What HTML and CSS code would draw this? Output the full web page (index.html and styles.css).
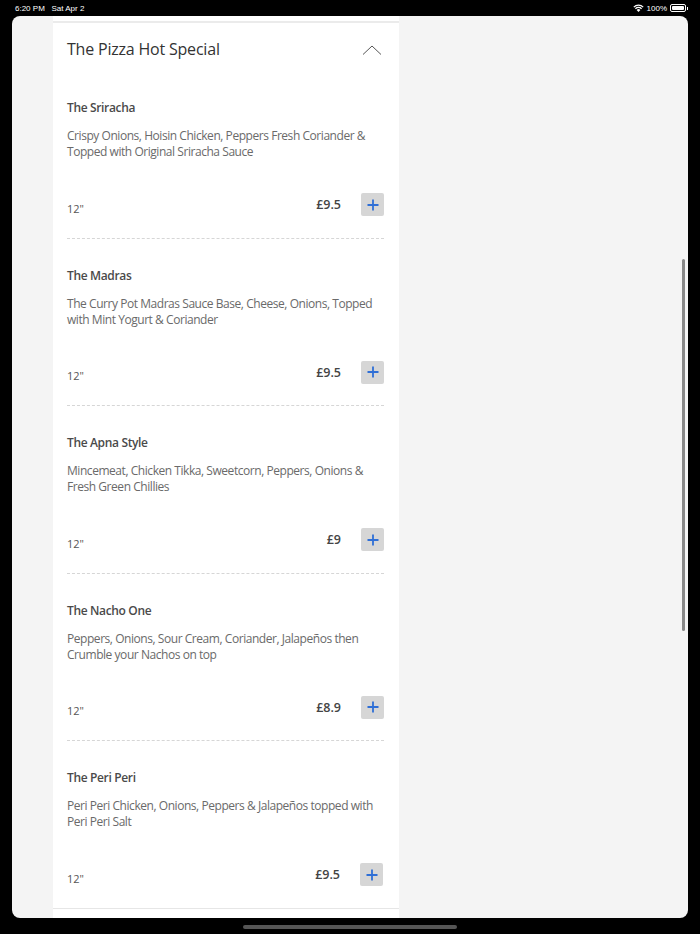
FILE: index.html
```html
<!DOCTYPE html>
<html>
<head>
<meta charset="utf-8">
<link rel="stylesheet" href="styles.css">
<title>The Pizza Hot Special</title>
</head>
<body>
  <div class="statusbar">
    <span class="time">6:20 PM&nbsp;&nbsp;&nbsp;Sat Apr 2</span>
    <span class="status-right">
      <svg class="wifi" width="11" height="8" viewBox="0 0 11 8"><path d="M5.5 8 L3.6 6 A2.7 2.7 0 0 1 7.4 6 Z" fill="#fff"/><path d="M2.4 4.8 A4.4 4.4 0 0 1 8.6 4.8" stroke="#fff" stroke-width="1.3" fill="none"/><path d="M0.8 3.1 A6.7 6.7 0 0 1 10.2 3.1" stroke="#fff" stroke-width="1.3" fill="none"/></svg>
      <span>100%</span>
      <span class="battery"><span class="battery-fill"></span></span>
    </span>
  </div>

  <div class="screen">
    <div class="column">
      <div class="topstrip"></div>
      <div class="card">
        <div class="card-head">
          <h2>The Pizza Hot Special</h2>
          <svg class="chevron" width="20" height="10" viewBox="0 0 20 10"><path d="M1 9.5 L10 1 L19 9.5" stroke="#555" stroke-width="1" fill="none"/></svg>
        </div>

        <div class="item">
          <div class="item-name">The Sriracha</div>
          <div class="item-desc">Crispy Onions, Hoisin Chicken, Peppers Fresh Coriander &amp; Topped with Original Sriracha Sauce</div>
          <div class="item-row">
            <span class="size">12"</span>
            <span class="price">£9.5</span>
            <span class="add"><svg width="12" height="12" viewBox="0 0 12 12"><path d="M6 0.5 V11.5 M0.5 6 H11.5" stroke="#2f6fd6" stroke-width="1.8"/></svg></span>
          </div>
        </div>

        <div class="item">
          <div class="item-name">The Madras</div>
          <div class="item-desc">The Curry Pot Madras Sauce Base, Cheese, Onions, Topped with Mint Yogurt &amp; Coriander</div>
          <div class="item-row">
            <span class="size">12"</span>
            <span class="price">£9.5</span>
            <span class="add"><svg width="12" height="12" viewBox="0 0 12 12"><path d="M6 0.5 V11.5 M0.5 6 H11.5" stroke="#2f6fd6" stroke-width="1.8"/></svg></span>
          </div>
        </div>

        <div class="item">
          <div class="item-name">The Apna Style</div>
          <div class="item-desc">Mincemeat, Chicken Tikka, Sweetcorn, Peppers, Onions &amp; Fresh Green Chillies</div>
          <div class="item-row">
            <span class="size">12"</span>
            <span class="price">£9</span>
            <span class="add"><svg width="12" height="12" viewBox="0 0 12 12"><path d="M6 0.5 V11.5 M0.5 6 H11.5" stroke="#2f6fd6" stroke-width="1.8"/></svg></span>
          </div>
        </div>

        <div class="item">
          <div class="item-name">The Nacho One</div>
          <div class="item-desc">Peppers, Onions, Sour Cream, Coriander, Jalapeños then Crumble your Nachos on top</div>
          <div class="item-row">
            <span class="size">12"</span>
            <span class="price">£8.9</span>
            <span class="add"><svg width="12" height="12" viewBox="0 0 12 12"><path d="M6 0.5 V11.5 M0.5 6 H11.5" stroke="#2f6fd6" stroke-width="1.8"/></svg></span>
          </div>
        </div>

        <div class="item last">
          <div class="item-name">The Peri Peri</div>
          <div class="item-desc">Peri Peri Chicken, Onions, Peppers &amp; Jalapeños topped with Peri Peri Salt</div>
          <div class="item-row">
            <span class="size">12"</span>
            <span class="price">£9.5</span>
            <span class="add"><svg width="12" height="12" viewBox="0 0 12 12"><path d="M6 0.5 V11.5 M0.5 6 H11.5" stroke="#2f6fd6" stroke-width="1.8"/></svg></span>
          </div>
        </div>
      </div>
    </div>
    <div class="scrollbar"></div>
  </div>

  <div class="homebar"><span></span></div>
</body>
</html>
```

FILE: styles.css
```css
*{margin:0;padding:0;box-sizing:border-box;}
body{background:#000;font-family:"Open Sans","Liberation Sans",sans-serif;width:700px;height:934px;overflow:hidden;}

.statusbar{height:16px;display:flex;justify-content:space-between;align-items:center;padding:0 14px 0 15px;color:#fff;font-size:8px;font-family:"Liberation Sans",sans-serif;}
.status-right{display:flex;align-items:center;gap:3px;}
.battery{width:16px;height:8px;border:1px solid #fff;border-radius:2px;padding:1px;position:relative;}
.battery:after{content:"";position:absolute;right:-3px;top:2px;width:1px;height:3px;background:#fff;}
.battery-fill{display:block;width:100%;height:100%;background:#fff;border-radius:1px;}

.screen{margin:0 12px;height:902px;background:#f4f4f4;border-radius:8px;overflow:hidden;position:relative;}
.column{margin-left:41px;width:346px;}
.topstrip{height:7px;background:#fff;border-bottom:2px solid #ebebeb;}
.card{background:#fff;height:900px;}

.card-head{display:flex;justify-content:space-between;align-items:center;padding:14px 17px 10px 14px;height:48px;}
.card-head h2{font-size:16px;font-weight:400;color:#333;line-height:24px;letter-spacing:-0.2px;}
.chevron{margin-top:2px;}

.item{margin:0 15px 0 14px;padding:29px 0 21.5px;border-bottom:1px dashed #d6d6d6;}
.item.last{margin:0;padding:29px 16px 21.5px 14px;border-bottom:1px solid #e6e6e6;}
.item-name{font-size:12px;font-weight:600;color:#4a4a4a;line-height:16px;letter-spacing:-0.35px;}
.item-desc{margin-top:12px;font-size:12px;color:#6a6a6a;line-height:16px;letter-spacing:-0.45px;}
.item-row{display:flex;align-items:center;margin-top:33px;}
.size{flex:1;font-size:11px;color:#555;padding-top:7px;}
.price{font-size:12.5px;font-weight:600;color:#444;margin-right:20px;}
.add{width:23px;height:23px;background:#d6d6d6;border-radius:2px;display:flex;align-items:center;justify-content:center;}

.scrollbar{position:absolute;right:3px;top:243px;width:3px;height:372px;background:#888;border-radius:2px;}

.homebar{display:flex;justify-content:center;padding-top:7px;}
.homebar span{width:214px;height:4px;background:#555;border-radius:2px;}
```
